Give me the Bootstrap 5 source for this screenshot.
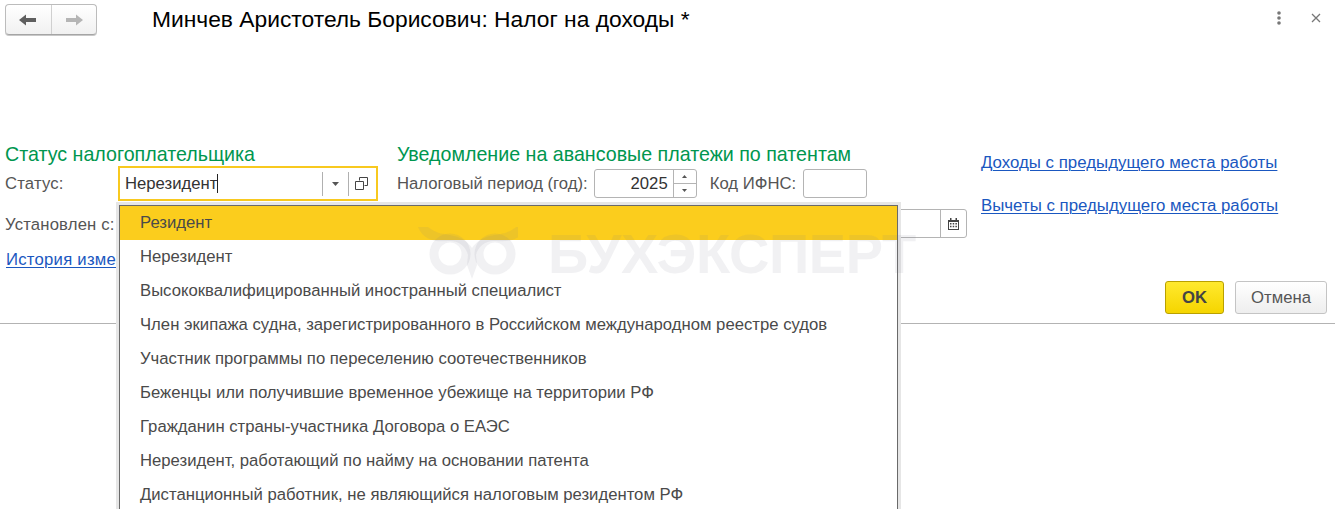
<!DOCTYPE html>
<html lang="ru">
<head>
<meta charset="utf-8">
<title>Налог на доходы</title>
<link href="https://cdn.jsdelivr.net/npm/bootstrap@5.3.0/dist/css/bootstrap.min.css" rel="stylesheet">
<style>
html,body{height:509px;overflow:hidden;background:#fff}
body{font-family:"Liberation Sans",Arial,sans-serif;font-size:16.7px;color:#4b4b4b;line-height:19px}
.screen{position:relative;width:1335px;height:509px;overflow:hidden}
.topbar{height:144px;padding:4px 8px 0 5px}
.navpair{width:92px;height:31px;border:1px solid #bcbcbc;border-bottom-color:#a5a5a5;border-radius:4px;background:linear-gradient(#fff,#f1f1f1);box-shadow:0 1px 0 #c8c8c8}
.navcell{flex:1;display:flex;align-items:center;justify-content:center}
.navcell+.navcell{border-left:1px solid #d0d0d0}
.wintitle{font-size:22.8px;line-height:26px;color:#000;margin-left:55px;margin-top:2px}
.winicons{margin-top:7px;gap:29px;margin-right:6px;margin-left:auto}
.formrow{height:180px;border-bottom:1px solid #b3b3b3;padding:0 8px 0 5px;position:relative}
.colone{width:392px}
.coltwo{width:584px}
.sectitle{font-size:19.65px;line-height:21px;color:#00964f}
.fieldline{display:flex;align-items:center}
.lbl{color:#555;white-space:nowrap}
.lblwide{letter-spacing:.17px}
.statusline{height:35px;margin-top:1px}
.statuslbl{width:113px}
.combo{width:260px;height:35px;border:2px solid #f8c91f;padding:0 2px 0 5px;color:#333;flex:none}
.caret{width:1px;height:19px;background:#222}
.combobtn{width:26px;height:24px;border-left:1px solid #b0b0b0;display:flex;align-items:center;justify-content:center}
.dateline{height:35px;margin-top:6px}
.historyline{margin-top:8px;padding-left:1px;letter-spacing:.25px}
.linkmain{color:#1a57c0;text-decoration:underline;text-underline-offset:2px;text-decoration-thickness:1px;white-space:nowrap}
.boxfield{height:29px;border:1px solid #b4b4b4;border-radius:3px;background:#fff}
.spinfield{width:103px;margin-left:6px;margin-right:13px;color:#333}
.spinval{flex:1;text-align:right;padding-right:5px}
.spinbtns{width:23px;height:100%;border-left:1px solid #b4b4b4}
.spinbtns div{flex:1;display:flex;align-items:center;justify-content:center}
.spinbtns div+div{border-top:1px solid #b4b4b4}
.ifns{width:64px;margin-left:7px}
.datefield{width:570px;margin-top:11px;display:flex;justify-content:flex-end}
.calbtn{width:26px;border-left:1px solid #b4b4b4;display:flex;align-items:center;justify-content:center}
.sidelinks{padding-top:9px;font-size:16.85px}
.sidelinks div+div{margin-top:24px}
.actionbar{position:absolute;right:8px;bottom:9px;gap:11px}
.btn-ok1c,.btn-cancel1c{height:33px;border-radius:3px;display:flex;align-items:center;justify-content:center;font-size:16.7px}
.btn-ok1c{width:59px;background:linear-gradient(#ffe92e,#f5d500);border:1px solid #b9a000;font-weight:700;color:#444}
.btn-cancel1c{width:92px;background:linear-gradient(#fff,#eee);border:1px solid #c4c4c4;color:#555}
.dropdownlist{position:absolute;left:116px;top:202px;width:785px;height:330px;border:3px solid #e6e6e6;background:#fff;z-index:5}
.dropinner{border:1px solid #6a6a6a;height:100%;background:#fff;border-bottom:0}
.dropitem{height:34px;padding-left:20px;line-height:33px;color:#4a4a4a;white-space:nowrap}
.dropitem.active-row{background:#fbcd1d}
.stamp{position:absolute;left:418px;top:222px;z-index:9;pointer-events:none;display:flex;align-items:center}
.stamptext{font-size:56px;line-height:60px;font-weight:700;letter-spacing:-.4px;color:rgba(120,120,145,.105);margin-left:30px;margin-top:2px;white-space:nowrap}
</style>
</head>
<body>
<div class="screen">
  <div class="topbar d-flex align-items-start">
    <div class="navpair d-flex">
      <div class="navcell"><svg width="18" height="12" viewBox="0 0 18 12"><path d="M0 6 7 .5V4h10v4H7v3.5z" fill="#5f5f5f"/></svg></div>
      <div class="navcell"><svg width="18" height="12" viewBox="0 0 18 12"><path d="M18 6 11 .5V4H1v4h10v3.5z" fill="#b5b5b5"/></svg></div>
    </div>
    <div class="wintitle">Минчев Аристотель Борисович: Налог на доходы *</div>
    <div class="winicons d-flex align-items-center">
      <svg width="6" height="14" viewBox="0 0 6 14"><g fill="#777"><circle cx="3" cy="2" r="1.8"/><circle cx="3" cy="7" r="1.8"/><circle cx="3" cy="12" r="1.8"/></g></svg>
      <svg width="10" height="10" viewBox="0 0 10 10"><path d="M1 1l8 8M9 1l-8 8" stroke="#777" stroke-width="1.3" fill="none"/></svg>
    </div>
  </div>
  <div class="formrow d-flex">
    <div class="colone">
      <div class="sectitle">Статус налогоплательщика</div>
      <div class="fieldline statusline">
        <span class="lbl lblwide statuslbl">Статус:</span>
        <div class="combo d-flex align-items-center">
          <span>Нерезидент</span><span class="caret"></span>
          <div class="combobtn ms-auto"><svg width="7" height="4" viewBox="0 0 7 4"><path d="M0 0h7L3.500 4z" fill="#555"/></svg></div>
          <div class="combobtn"><svg width="13" height="13" viewBox="0 0 13 13"><g fill="none" stroke="#444" stroke-width="1"><path d="M4.500 3.500V.5h8v8h-3"/><path d="M.5 4.500h8v8h-8z"/></g></svg></div>
        </div>
      </div>
      <div class="fieldline dateline"><span class="lbl lblwide">Установлен с:</span></div>
      <div class="historyline"><a href="#" class="linkmain">История изме</a></div>
    </div>
    <div class="coltwo">
      <div class="sectitle">Уведомление на авансовые платежи по патентам</div>
      <div class="fieldline mt-1">
        <span class="lbl">Налоговый период (год):</span>
        <div class="boxfield spinfield d-flex align-items-center">
          <div class="spinval">2025</div>
          <div class="spinbtns d-flex flex-column">
            <div><svg width="5" height="3" viewBox="0 0 5 3"><path d="M2.500 0 5 3H0z" fill="#555"/></svg></div>
            <div><svg width="5" height="3" viewBox="0 0 5 3"><path d="M2.500 3 5 0H0z" fill="#555"/></svg></div>
          </div>
        </div>
        <span class="lbl">Код ИФНС:</span>
        <div class="boxfield ifns"></div>
      </div>
      <div class="boxfield datefield">
        <div class="calbtn">
          <svg width="11" height="12" viewBox="0 0 11 12"><path d="M0 2h2V0h1.500v2h4V0H9v2h2v10H0zM1 4v7h9V4z" fill="#444"/><path d="M2 5h1.500v1.500H2zM4.700 5h1.500v1.500H4.700zM7.400 5h1.500v1.500H7.400zM2 7.800h1.500v1.500H2zM4.700 7.800h1.500v1.500H4.700zM7.400 7.800h1.500v1.500H7.400z" fill="#444"/></svg>
        </div>
      </div>
    </div>
    <div class="sidelinks">
      <div><a href="#" class="linkmain">Доходы с предыдущего места работы</a></div>
      <div><a href="#" class="linkmain">Вычеты с предыдущего места работы</a></div>
    </div>
    <div class="actionbar d-flex">
      <div class="btn-ok1c">OK</div>
      <div class="btn-cancel1c">Отмена</div>
    </div>
  </div>
  <div class="dropdownlist">
    <div class="dropinner">
      <div class="dropitem active-row">Резидент</div>
      <div class="dropitem">Нерезидент</div>
      <div class="dropitem">Высококвалифицированный иностранный специалист</div>
      <div class="dropitem">Член экипажа судна, зарегистрированного в Российском международном реестре судов</div>
      <div class="dropitem">Участник программы по переселению соотечественников</div>
      <div class="dropitem">Беженцы или получившие временное убежище на территории РФ</div>
      <div class="dropitem">Гражданин страны-участника Договора о ЕАЭС</div>
      <div class="dropitem">Нерезидент, работающий по найму на основании патента</div>
      <div class="dropitem">Дистанционный работник, не являющийся налоговым резидентом РФ</div>
    </div>
  </div>
  <div class="stamp">
    <svg width="100" height="60" viewBox="0 0 100 60"><g fill="none" stroke="rgba(120,120,145,.105)" stroke-width="9"><circle cx="32" cy="31" r="16"/><circle cx="77" cy="31" r="16"/></g><path d="M0 4h10c8 7 18 7 26 9 8 2 14 6 18 12 4-6 10-10 18-12 8-2 18-2 26-9h10c-6 14-18 15-30 14-10-1-18 5-20 14l1 10-5 14-5-14 1-10c-2-9-10-15-20-14C18 19 6 18 0 4z" fill="rgba(120,120,145,.105)"/></svg>
    <span class="stamptext">БУХЭКСПЕРТ</span>
  </div>
</div>
<script src="https://cdn.jsdelivr.net/npm/bootstrap@5.3.0/dist/js/bootstrap.bundle.min.js"></script>
</body>
</html>
